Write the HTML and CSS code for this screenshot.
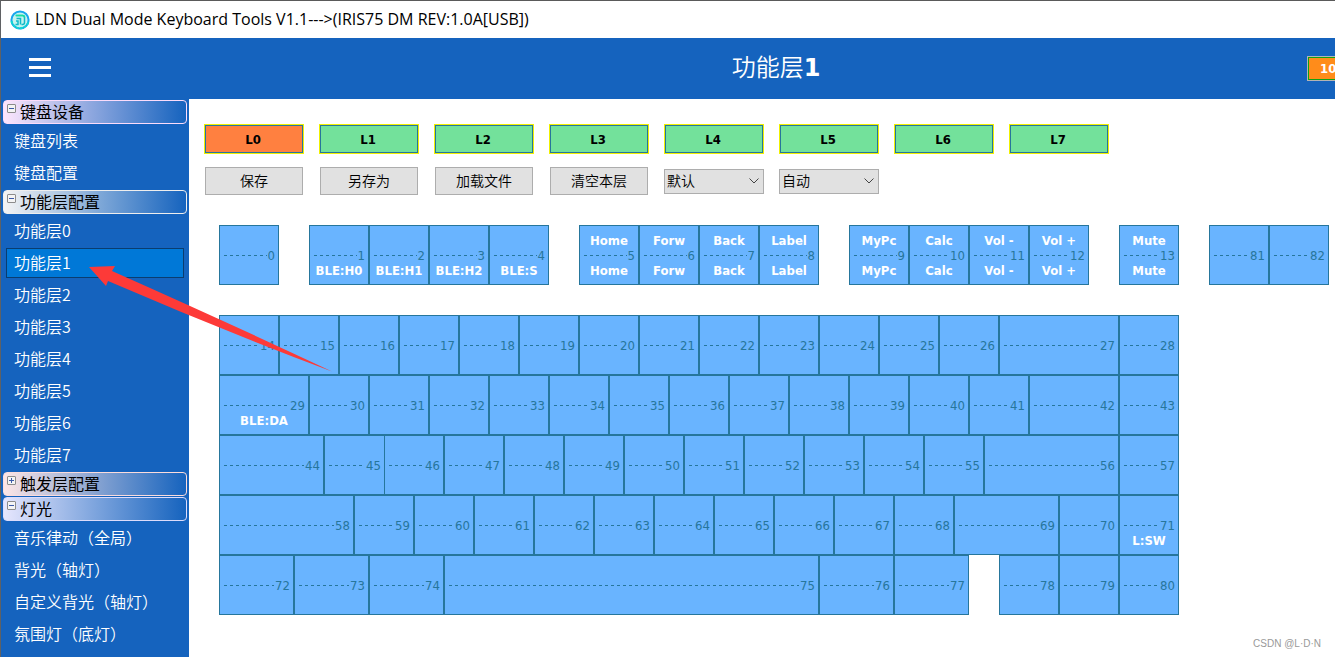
FILE: index.html
```html
<!DOCTYPE html>
<html lang="zh-CN">
<head>
<meta charset="utf-8">
<title>LDN Dual Mode Keyboard Tools</title>
<link rel="stylesheet" href="styles.css">
</head>
<body>
<div class="window">
  <div class="titlebar">
    <svg class="app-icon" viewBox="0 0 20 20" aria-hidden="true">
      <circle cx="10" cy="10" r="8.6" fill="#c4f3ee" stroke="#18a6ee" stroke-width="2"/>
      <path d="M1.5 11a8.6 8.6 0 0 0 17 0" fill="none" stroke="#12d8d2" stroke-width="2" stroke-dasharray="3 1"/>
      <path d="M6 5.5h6.5q2 0 2 2v5q0 2-2 2h-1M6.5 8.500h4v6M6 11h2v3.500H5.500" fill="none" stroke="#10b9c9" stroke-width="1.500"/>
      <path d="M5.500 5.500h7q2 0 2 2" fill="none" stroke="#16dfa0" stroke-width="1.500"/>
    </svg>
    <span>LDN Dual Mode Keyboard Tools V1.1---&gt;(IRIS75 DM REV:1.0A[USB])</span>
  </div>
  <header class="header">
    <button class="menu" aria-label="菜单"><i></i><i></i><i></i></button>
    <h1>功能层<b>1</b></h1>
    <div class="badge">10</div>
  </header>
  <div class="body">
    <nav class="sidebar">
      <button class="group pink"><span class="box"></span>键盘设备</button>
      <ul>
        <li><a href="#">键盘列表</a></li>
        <li><a href="#">键盘配置</a></li>
      </ul>
      <button class="group grey"><span class="box"></span>功能层配置</button>
      <ul>
        <li><a href="#">功能层0</a></li>
        <li><a href="#" class="selected">功能层1</a></li>
        <li><a href="#">功能层2</a></li>
        <li><a href="#">功能层3</a></li>
        <li><a href="#">功能层4</a></li>
        <li><a href="#">功能层5</a></li>
        <li><a href="#">功能层6</a></li>
        <li><a href="#">功能层7</a></li>
      </ul>
      <button class="group rose"><span class="box plus"></span>触发层配置</button>
      <button class="group lilac"><span class="box"></span>灯光</button>
      <ul>
        <li><a href="#">音乐律动（全局）</a></li>
        <li><a href="#">背光（轴灯）</a></li>
        <li><a href="#">自定义背光（轴灯）</a></li>
        <li><a href="#">氛围灯（底灯）</a></li>
      </ul>
    </nav>
    <main class="main">
      <div class="tools layers">
        <button class="layer active">L0</button>
        <button class="layer">L1</button>
        <button class="layer">L2</button>
        <button class="layer">L3</button>
        <button class="layer">L4</button>
        <button class="layer">L5</button>
        <button class="layer">L6</button>
        <button class="layer">L7</button>
      </div>
      <div class="tools">
        <button class="action">保存</button>
        <button class="action">另存为</button>
        <button class="action">加载文件</button>
        <button class="action">清空本层</button>
        <div class="pick">
          <select aria-label="布局"><option>默认</option></select>
          <svg viewBox="0 0 10 6" aria-hidden="true"><path d="M.5.500 5 5 9.500.500"/></svg>
        </div>
        <div class="pick">
          <select aria-label="模式"><option>自动</option></select>
          <svg viewBox="0 0 10 6" aria-hidden="true"><path d="M.5.500 5 5 9.500.500"/></svg>
        </div>
      </div>
      <div class="keyboard">
        <div class="row function-row">
          <button class="key"><span class="num">0</span></button>
          <button class="key gap"><span class="num">1</span><b>BLE:H0</b></button>
          <button class="key"><span class="num">2</span><b>BLE:H1</b></button>
          <button class="key"><span class="num">3</span><b>BLE:H2</b></button>
          <button class="key"><span class="num">4</span><b>BLE:S</b></button>
          <button class="key gap"><b class="top">Home</b><span class="num">5</span><b>Home</b></button>
          <button class="key"><b class="top">Forw</b><span class="num">6</span><b>Forw</b></button>
          <button class="key"><b class="top">Back</b><span class="num">7</span><b>Back</b></button>
          <button class="key"><b class="top">Label</b><span class="num">8</span><b>Label</b></button>
          <button class="key gap"><b class="top">MyPc</b><span class="num">9</span><b>MyPc</b></button>
          <button class="key"><b class="top">Calc</b><span class="num">10</span><b>Calc</b></button>
          <button class="key"><b class="top">Vol -</b><span class="num">11</span><b>Vol -</b></button>
          <button class="key"><b class="top">Vol +</b><span class="num">12</span><b>Vol +</b></button>
          <button class="key gap"><b class="top">Mute</b><span class="num">13</span><b>Mute</b></button>
          <button class="key gap"><span class="num">81</span></button>
          <button class="key"><span class="num">82</span></button>
        </div>
        <div class="row">
          <button class="key"><span class="num">14</span></button>
          <button class="key"><span class="num">15</span></button>
          <button class="key"><span class="num">16</span></button>
          <button class="key"><span class="num">17</span></button>
          <button class="key"><span class="num">18</span></button>
          <button class="key"><span class="num">19</span></button>
          <button class="key"><span class="num">20</span></button>
          <button class="key"><span class="num">21</span></button>
          <button class="key"><span class="num">22</span></button>
          <button class="key"><span class="num">23</span></button>
          <button class="key"><span class="num">24</span></button>
          <button class="key"><span class="num">25</span></button>
          <button class="key"><span class="num">26</span></button>
          <button class="key u200"><span class="num">27</span></button>
          <button class="key"><span class="num">28</span></button>
        </div>
        <div class="row">
          <button class="key u150"><span class="num">29</span><b>BLE:DA</b></button>
          <button class="key"><span class="num">30</span></button>
          <button class="key"><span class="num">31</span></button>
          <button class="key"><span class="num">32</span></button>
          <button class="key"><span class="num">33</span></button>
          <button class="key"><span class="num">34</span></button>
          <button class="key"><span class="num">35</span></button>
          <button class="key"><span class="num">36</span></button>
          <button class="key"><span class="num">37</span></button>
          <button class="key"><span class="num">38</span></button>
          <button class="key"><span class="num">39</span></button>
          <button class="key"><span class="num">40</span></button>
          <button class="key"><span class="num">41</span></button>
          <button class="key u150"><span class="num">42</span></button>
          <button class="key"><span class="num">43</span></button>
        </div>
        <div class="row">
          <button class="key u175"><span class="num">44</span></button>
          <button class="key open"><span class="num">45</span></button>
          <button class="key"><span class="num">46</span></button>
          <button class="key"><span class="num">47</span></button>
          <button class="key"><span class="num">48</span></button>
          <button class="key"><span class="num">49</span></button>
          <button class="key"><span class="num">50</span></button>
          <button class="key"><span class="num">51</span></button>
          <button class="key"><span class="num">52</span></button>
          <button class="key"><span class="num">53</span></button>
          <button class="key"><span class="num">54</span></button>
          <button class="key"><span class="num">55</span></button>
          <button class="key u225"><span class="num">56</span></button>
          <button class="key"><span class="num">57</span></button>
        </div>
        <div class="row">
          <button class="key u225"><span class="num">58</span></button>
          <button class="key"><span class="num">59</span></button>
          <button class="key"><span class="num">60</span></button>
          <button class="key"><span class="num">61</span></button>
          <button class="key"><span class="num">62</span></button>
          <button class="key"><span class="num">63</span></button>
          <button class="key"><span class="num">64</span></button>
          <button class="key"><span class="num">65</span></button>
          <button class="key"><span class="num">66</span></button>
          <button class="key"><span class="num">67</span></button>
          <button class="key"><span class="num">68</span></button>
          <button class="key u175"><span class="num">69</span></button>
          <button class="key"><span class="num">70</span></button>
          <button class="key"><span class="num">71</span><b>L:SW</b></button>
        </div>
        <div class="row">
          <button class="key u125"><span class="num">72</span></button>
          <button class="key u125"><span class="num">73</span></button>
          <button class="key u125"><span class="num">74</span></button>
          <button class="key u625"><span class="num">75</span></button>
          <button class="key u125"><span class="num">76</span></button>
          <button class="key u125"><span class="num">77</span></button>
          <button class="key gap"><span class="num">78</span></button>
          <button class="key"><span class="num">79</span></button>
          <button class="key"><span class="num">80</span></button>
        </div>
      </div>
    </main>
  </div>
  <svg class="arrow" viewBox="0 0 244 106" aria-hidden="true"><path d="M0 1 26 0 23 5 Q140 57 243 105.500 Q130 63 19 15L17 20Z" fill="#fd3a38"/></svg>
  <div class="watermark">CSDN @L·D·N</div>
</div>
</body>
</html>
```
FILE: styles.css
```css
* {
  box-sizing: border-box;
}

body {
  margin: 0;
  background: #fff;
  font-family: "Noto Sans", "Noto Sans CJK SC", sans-serif;
  overflow: hidden;
}

button,
select {
  margin: 0;
  padding: 0;
  font: inherit;
}

.window {
  position: relative;
  display: flex;
  flex-direction: column;
  height: 100vh;
  overflow: hidden;
  border-top: 1px solid #5a5a5a;
  border-left: 1px solid #5f6164;
}

.titlebar {
  display: flex;
  flex: none;
  align-items: center;
  gap: 5px;
  height: 37px;
  padding-left: 9px;
  color: #000;
  font-family: "Open Sans", sans-serif;
  font-size: 16px;
  line-height: 22px;
  white-space: nowrap;
}

.titlebar span {
  padding-bottom: 2px;
}

.app-icon {
  width: 20px;
  height: 20px;
}

.header {
  display: grid;
  flex: none;
  grid-template-columns: 244px 1fr 28px;
  align-items: center;
  height: 61px;
  background: #1563be;
  color: #fff;
}

.menu {
  display: flex;
  flex-direction: column;
  gap: 5px;
  width: 22px;
  margin-left: 28px;
  padding-bottom: 2px;
  border: 0;
  background: none;
}

.menu i {
  height: 3px;
  background: #fff;
}

.header h1 {
  margin: 0;
  padding-bottom: 4px;
  font-family: "Noto Sans CJK SC", sans-serif;
  font-size: 24px;
  font-weight: 350;
  line-height: 32px;
  text-align: center;
}

.header b {
  font-family: "DejaVu Sans", sans-serif;
  font-weight: 700;
}

.badge {
  width: 60px;
  height: 25px;
  padding-left: 12px;
  border: 1px solid #b4b4b4;
  outline: 1px solid #12a012;
  outline-offset: -2px;
  background: #ff8c1a;
  font: bold 13px/23px "DejaVu Sans Condensed", "DejaVu Sans", sans-serif;
}

.body {
  display: flex;
  flex: 1;
  min-height: 0;
}

.sidebar {
  display: flex;
  flex: none;
  flex-direction: column;
  gap: 1px;
  width: 188px;
  padding: 1px 2px 0;
  overflow: hidden;
  background: #1563be;
  font-family: "Noto Sans CJK SC", sans-serif;
  font-size: 16px;
  font-weight: 350;
}

.group {
  display: flex;
  flex: none;
  gap: 4px;
  height: 24px;
  padding: 0 3px;
  border: 1px solid;
  border-radius: 4px;
  color: #000;
  font-weight: 400;
  line-height: 20px;
  text-align: left;
}

.pink {
  border-color: #fbdcfb;
  background: linear-gradient(90deg, #fde6fd, #1563be);
}

.grey {
  border-color: #eee;
  background: linear-gradient(90deg, #f4f4f4, #1563be);
}

.rose {
  border-color: #fbdcdc;
  background: linear-gradient(90deg, #fde6e6, #1563be);
}

.lilac {
  border-color: #dcdcfb;
  background: linear-gradient(90deg, #e6e6fd, #1563be);
}

.box {
  width: 9px;
  height: 9px;
  margin-top: 3px;
  border: 1px solid #8c8c8c;
  border-radius: 1px;
  background: linear-gradient(#3c5aa8, #3c5aa8) center / 5px 1px no-repeat, #f4f4f4;
}

.box.plus {
  background: linear-gradient(#3c5aa8, #3c5aa8) center / 5px 1px no-repeat, linear-gradient(#3c5aa8, #3c5aa8) center / 1px 5px no-repeat, #f4f4f4;
}

.sidebar ul {
  margin: 0;
  padding: 0;
  list-style: none;
}

.sidebar li {
  padding: 1px 3px;
}

.sidebar a {
  display: block;
  height: 30px;
  padding-left: 7px;
  border: 1px solid transparent;
  color: #fff;
  line-height: 26px;
  text-decoration: none;
  white-space: nowrap;
}

.sidebar .selected {
  border-color: #0a3d70;
  background: #0078d7;
}

.main {
  flex: 1;
  min-width: 0;
  padding: 25px 0 0 15px;
}

.tools {
  display: grid;
  grid-template-columns: repeat(8, 100px);
  column-gap: 15px;
  align-items: center;
}

.layers {
  margin-bottom: 13px;
}

.layer {
  height: 30px;
  padding-right: 2px;
  border: 1px solid #f0f000;
  outline: 1px solid #26769c;
  outline-offset: -2px;
  background: #73e19b;
  color: #000;
  font: bold 13px "DejaVu Sans Condensed", "DejaVu Sans", sans-serif;
}

.layer.active {
  background: #ff8040;
}

.action {
  height: 28px;
  margin: 0 1px;
  padding-bottom: 2px;
  border: 1px solid #adadad;
  background: #e1e1e1;
  color: #000;
  font: 350 14px/20px "Noto Sans CJK SC", sans-serif;
}

.pick {
  position: relative;
}

.pick select {
  display: block;
  width: 100%;
  height: 25px;
  padding: 0 0 2px 2px;
  border: 1px solid #adadad;
  border-radius: 0;
  background: #e1e1e1;
  color: #000;
  font: 350 14px/20px "Noto Sans CJK SC", sans-serif;
  appearance: none;
}

.pick svg {
  position: absolute;
  top: 9px;
  right: 5px;
  width: 10px;
  height: 6px;
  fill: none;
  stroke: #444;
  pointer-events: none;
}

.keyboard {
  padding: 30px 0 0 15px;
}

.row {
  display: flex;
}

.function-row {
  margin-bottom: 30px;
}

.key {
  display: grid;
  flex: none;
  grid-template-rows: repeat(3, 15px);
  align-content: center;
  width: 60px;
  height: 60px;
  border: 1px solid #26769c;
  background: #69b4ff;
  color: #26769c;
  font: 13px/15px "DejaVu Sans Condensed", "DejaVu Sans", sans-serif;
}

.key b {
  grid-row: 3;
  color: #fff;
  text-align: center;
}

.key .top {
  grid-row: 1;
}

.num {
  display: flex;
  grid-row: 2;
  align-items: center;
  padding: 0 3px 0 4px;
}

.num::before {
  content: "";
  flex: 1;
  height: 1px;
  margin-right: 1px;
  background: repeating-linear-gradient(90deg, #26769c 0 3px, transparent 3px 6px);
}

.gap {
  margin-left: 30px;
}

.open {
  border-right: 0;
}

.u125 {
  width: 75px;
}

.u150 {
  width: 90px;
}

.u175 {
  width: 105px;
}

.u200 {
  width: 120px;
}

.u225 {
  width: 135px;
}

.u625 {
  width: 375px;
}

.arrow {
  position: absolute;
  top: 265px;
  left: 88px;
  width: 244px;
  height: 106px;
  pointer-events: none;
}

.watermark {
  position: absolute;
  right: 14px;
  bottom: 5px;
  color: #999;
  font: 10px/16px "Liberation Sans", sans-serif;
}
```
